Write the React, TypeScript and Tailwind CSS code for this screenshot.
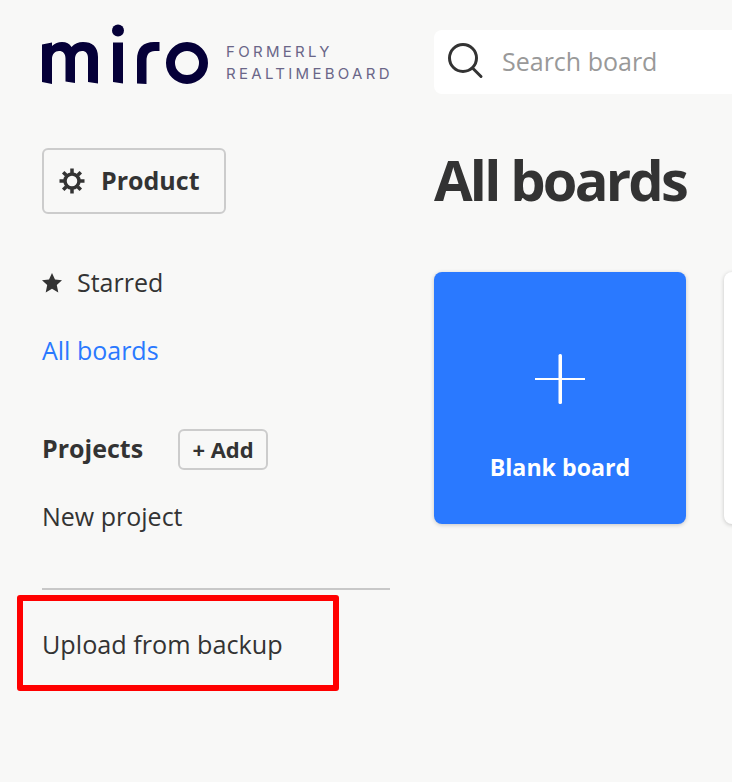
const openSans = { fontFamily: '"Open Sans", sans-serif' }

function MiroLogo() {
  return (
    <svg width="168" height="64" viewBox="0 0 168 64" className="shrink-0 overflow-visible">
      <g fill="#050038">
        {/* m */}
        <path d="M0 14.5 L10 12.5 L10 16 C13 13.5 16 12 20 12 C24.5 12 27.5 13.5 29.5 17 C32.5 13.5 36.5 12 41 12 C50 12 56 16.5 56 27 L56 53.5 L46 52 L46 28.5 C46 23.5 44 21 40 21 C36 21 33 24 33 29 L33 53 L23.5 51.5 L23.5 28.5 C23.5 23.5 21 21 17 21 C13 21 10 24 10 29 L10 54 L0 52 Z" />
        {/* i */}
        <circle cx="76" cy="0.500" r="6" />
        <path d="M71 12.5 L81 12.5 L81 53.5 L71 52 Z" />
        {/* r */}
        <path d="M95 53.5 L95 30 C95 18 101 12 112 12 L117.500 12 L117.500 21 L113 21 C107 21 104.500 24.500 104.500 31 L104.500 54 Z" />
      </g>
      {/* o */}
      <circle cx="145" cy="33" r="16.500" fill="none" stroke="#050038" strokeWidth="9" />
    </svg>
  )
}

function GearIcon() {
  return (
    <svg width="26" height="26" viewBox="0 0 26 26" fill="none" stroke="#333333" className="shrink-0">
      <circle cx="13" cy="13" r="7" strokeWidth="3.500" />
      <g strokeWidth="3.500">
        <path d="M13 0.500 V5" />
        <path d="M13 21 V25.500" />
        <path d="M0.500 13 H5" />
        <path d="M21 13 H25.500" />
        <path d="M4.200 4.200 L7.300 7.300" />
        <path d="M18.700 18.700 L21.800 21.800" />
        <path d="M4.200 21.800 L7.300 18.700" />
        <path d="M18.700 7.300 L21.800 4.200" />
      </g>
    </svg>
  )
}

function StarIcon() {
  return (
    <svg width="20" height="20" viewBox="0 0 20 20" className="shrink-0">
      <path
        d="M10 0 L13 6.600 L20 7.300 L14.800 12.100 L16.300 19.500 L10 15.800 L3.700 19.500 L5.200 12.100 L0 7.300 L7 6.600 Z"
        fill="#333333"
      />
    </svg>
  )
}

function SearchIcon() {
  return (
    <svg width="36" height="38" viewBox="0 0 36 38" fill="none" stroke="#333333" strokeWidth="3" strokeLinecap="round" className="shrink-0">
      <circle cx="15" cy="15" r="13.500" />
      <path d="M25 25.500 L33 33.500" />
    </svg>
  )
}

function PlusIcon() {
  return (
    <svg width="50" height="50" viewBox="0 0 50 50" fill="#ffffff">
      <rect x="0" y="24" width="50" height="2" />
      <rect x="23.500" y="0" width="3.500" height="50" rx="1.500" />
    </svg>
  )
}

export default function App() {
  return (
    <div className="flex h-screen w-full overflow-hidden bg-[#f8f8f7] text-[#333333]" style={openSans}>
      <aside className="ml-[42px] w-[348px] shrink-0 pt-[30px]">
        <div className="flex h-[64px] items-center gap-[16px]">
          <MiroLogo />
          <div className="pt-[1px] font-['Inter',sans-serif] text-[15px] leading-[22px] tracking-[3.300px] text-[#6a6688]">
            <div>FORMERLY</div>
            <div className="whitespace-nowrap">REALTIMEBOARD</div>
          </div>
        </div>

        <button className="mt-[54px] flex h-[66px] w-[184px] items-center gap-[16px] rounded-md border-2 border-[#cccccc] pl-[15px] text-[25px] font-bold">
          <GearIcon />
          Product
        </button>

        <div className="mt-[51px] flex h-[36px] items-center gap-[15px] text-[25px]">
          <StarIcon />
          Starred
        </div>
        <div className="mt-[31px] h-[36px] text-[25px] leading-[36px] text-[#2a79ff]">All boards</div>

        <div className="mt-[61px] flex h-[41px] items-center gap-[35px]">
          <span className="mt-[-2px] text-[25px] font-bold">Projects</span>
          <button className="h-[41px] w-[90px] rounded-md border-2 border-[#cccccc] text-[22px] font-bold">+ Add</button>
        </div>
        <div className="mt-[28px] h-[36px] text-[25px] leading-[36px]">New project</div>

        <div className="mt-[54px] h-[2px] bg-[#c8c8c8]" />

        <div className="relative mt-[36px] h-[36px] whitespace-nowrap text-[25.200px] leading-[36px]">
          Upload from backup
          <div className="absolute top-[-31px] left-[-25px] h-[96px] w-[322px] rounded-[3px] border-[6px] border-[#ff0000]" />
        </div>
      </aside>

      <main className="ml-[44px] min-w-0 flex-1 pt-[30px]">
        <div className="flex h-[64px] w-[500px] items-center gap-[18px] rounded-l-lg bg-white pl-[14px]">
          <SearchIcon />
          <span className="text-[25px] text-[#999999]">Search board</span>
        </div>

        <h1 className="mt-[47px] h-[80px] text-[56px] leading-[76px] font-bold tracking-[-2.800px]">All boards</h1>

        <div className="mt-[51px] flex gap-[38px]">
          <div className="flex h-[252px] w-[252px] shrink-0 flex-col items-center rounded-lg bg-[#2a79ff] pt-[82px] shadow-[0_1px_4px_rgba(0,0,0,0.2)]">
            <PlusIcon />
            <div className="mt-[45px] text-[23.200px] leading-[36px] font-bold text-white">Blank board</div>
          </div>
          <div className="h-[252px] w-[252px] shrink-0 rounded-lg bg-white shadow-[0_1px_4px_rgba(0,0,0,0.2)]" />
        </div>
      </main>
    </div>
  )
}
